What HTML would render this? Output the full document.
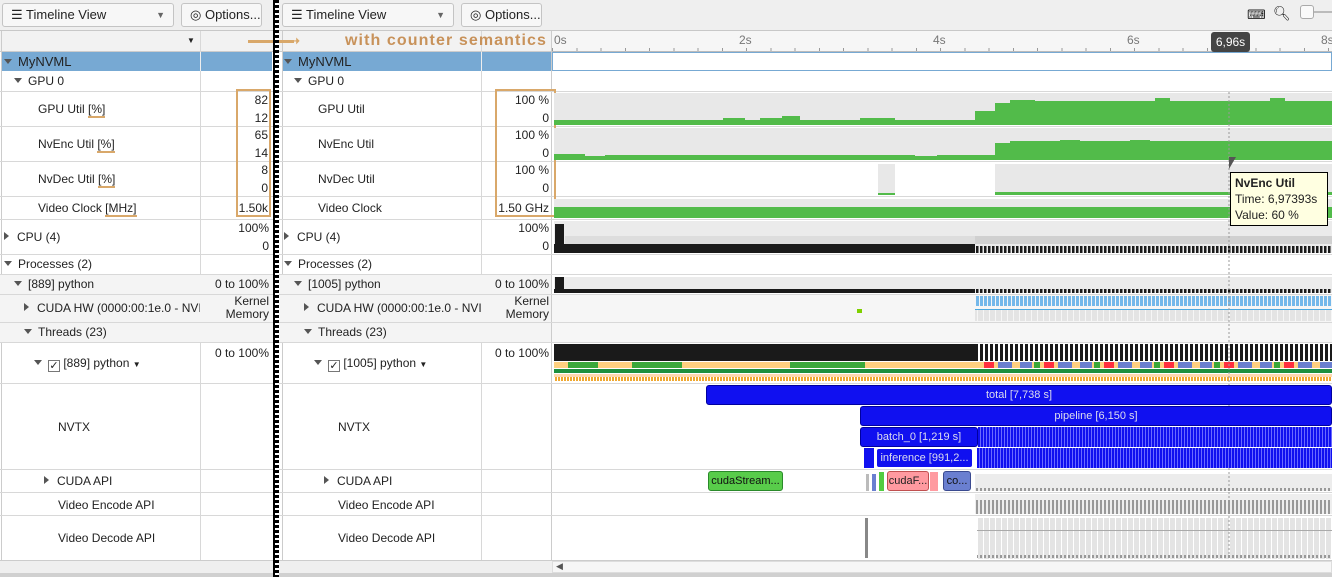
<!DOCTYPE html>
<html><head><meta charset="utf-8"><style>
*{margin:0;padding:0;box-sizing:border-box}
body{width:1332px;height:577px;overflow:hidden;background:#fff;font-family:"Liberation Sans",sans-serif;font-size:12px;color:#222;position:relative}
.a{position:absolute}
.btn{position:absolute;top:3px;height:24px;border:1px solid #c4c4c4;border-radius:3px;background:#f7f7f7;font-size:13px;line-height:22px;padding-left:8px}
.t{position:absolute;white-space:nowrap}
.v{position:absolute;text-align:right;white-space:nowrap}
.tri{display:inline-block;width:0;height:0;border-left:4px solid transparent;border-right:4px solid transparent;border-top:5px solid #555;margin-right:6px;vertical-align:2px}
.trr{display:inline-block;width:0;height:0;border-top:4px solid transparent;border-bottom:4px solid transparent;border-left:5px solid #555;margin-right:8px;vertical-align:1px}
.u{border-bottom:2px solid #d9a86a}
.nv{position:absolute;background:#1010f0;border:1px solid #0000a0;border-radius:3px;color:#dde;font-size:11px;text-align:center;line-height:18px;white-space:nowrap;overflow:hidden}
.strb{background:repeating-linear-gradient(90deg,#1010f0 0 2px,#6a6aff 2px 3px)}
</style></head><body>
<div class="a" style="left:0;top:0;width:1332px;height:31px;background:#efefef;border-bottom:1px solid #c8c8c8"></div>
<div class="btn" style="left:2px;width:172px">☰ Timeline View<span style="position:absolute;right:8px;top:0;font-size:9px;color:#666">▼</span></div>
<div class="btn" style="left:181px;width:81px">◎ Options...</div>
<div class="btn" style="left:282px;width:172px">☰ Timeline View<span style="position:absolute;right:8px;top:0;font-size:9px;color:#666">▼</span></div>
<div class="btn" style="left:461px;width:81px">◎ Options...</div>
<div class="t" style="left:1247px;top:7px;font-size:13px">⌨</div>
<div class="t" style="left:1273px;top:5px;font-size:14px">🔍︎</div>
<div class="a" style="left:1300px;top:5px;width:14px;height:14px;border:1px solid #aaa;border-radius:3px;background:#fafafa"></div>
<div class="a" style="left:1314px;top:11px;width:18px;height:2px;background:#bbb"></div>

<div class="a" style="left:0;top:31px;width:551px;height:21px;background:#f2f2f2;border-bottom:1px solid #ccc"></div>
<div class="a" style="left:200px;top:31px;width:1px;height:530px;background:#d8d8d8"></div>
<div class="a" style="left:481px;top:31px;width:1px;height:530px;background:#d8d8d8"></div>
<div class="a" style="left:551px;top:31px;width:1px;height:530px;background:#ccc"></div>
<div class="a" style="left:1px;top:31px;width:1px;height:530px;background:#ccc"></div>
<div class="a" style="left:282px;top:31px;width:1px;height:530px;background:#ccc"></div>
<div class="t" style="left:187px;top:36px;font-size:8px">▼</div>
<div class="a" style="left:248px;top:40px;width:46px;height:3px;background:#d9a86a"></div>
<div class="t" style="left:289px;top:33px;color:#d9a86a;font-size:13px;font-weight:bold">➝</div>
<div class="t" style="left:345px;top:32px;color:#c8925a;font-size:16px;font-weight:bold;letter-spacing:1.1px">with counter semantics</div>

<div class="a" style="left:552px;top:31px;width:780px;height:21px;background:#f6f6f6;border-bottom:1px solid #bbb;background-image:repeating-linear-gradient(90deg,#999 0 1px,transparent 1px 24.25px);background-size:780px 4px;background-repeat:no-repeat;background-position:0 17px"></div>
<div class="t" style="left:554px;top:33px;color:#777">0s</div>
<div class="t" style="left:739px;top:33px;color:#777">2s</div>
<div class="t" style="left:933px;top:33px;color:#777">4s</div>
<div class="t" style="left:1127px;top:33px;color:#777">6s</div>
<div class="t" style="left:1321px;top:33px;color:#777">8s</div>
<div class="a" style="left:1211px;top:32px;width:39px;height:20px;background:#444;border-radius:3px;color:#fff;text-align:center;line-height:20px">6,96s</div>

<div class="a" style="left:2px;top:52px;width:270px;height:19px;background:#77a9d3"></div>
<div class="a" style="left:283px;top:52px;width:268px;height:19px;background:#77a9d3"></div>
<div class="a" style="left:552px;top:52px;width:780px;height:19px;border:1px solid #77a9d3;background:#fff"></div>
<div class="a" style="left:200px;top:52px;width:1px;height:19px;background:#eee"></div>
<div class="a" style="left:481px;top:52px;width:1px;height:19px;background:#eee"></div>

<div class="a" style="left:0;top:91px;width:1332px;height:1px;background:#d8d8d8"></div>
<div class="a" style="left:0;top:126px;width:1332px;height:1px;background:#d8d8d8"></div>
<div class="a" style="left:0;top:161px;width:1332px;height:1px;background:#d8d8d8"></div>
<div class="a" style="left:0;top:196px;width:1332px;height:1px;background:#d8d8d8"></div>
<div class="a" style="left:0;top:219px;width:1332px;height:1px;background:#d8d8d8"></div>
<div class="a" style="left:0;top:254px;width:1332px;height:1px;background:#d8d8d8"></div>
<div class="a" style="left:0;top:274px;width:1332px;height:1px;background:#d8d8d8"></div>
<div class="a" style="left:0;top:275px;width:551px;height:19px;background:#f4f4f4"></div>
<div class="a" style="left:0;top:294px;width:1332px;height:1px;background:#d8d8d8"></div>
<div class="a" style="left:0;top:295px;width:551px;height:27px;background:#f4f4f4"></div>
<div class="a" style="left:552px;top:295px;width:780px;height:27px;background:#f6f6f6"></div>
<div class="a" style="left:0;top:322px;width:1332px;height:1px;background:#d8d8d8"></div>
<div class="a" style="left:0;top:323px;width:551px;height:19px;background:#f4f4f4"></div>
<div class="a" style="left:552px;top:323px;width:780px;height:19px;background:#f6f6f6"></div>
<div class="a" style="left:0;top:342px;width:1332px;height:1px;background:#d8d8d8"></div>
<div class="a" style="left:0;top:383px;width:1332px;height:1px;background:#d8d8d8"></div>
<div class="a" style="left:0;top:469px;width:1332px;height:1px;background:#d8d8d8"></div>
<div class="a" style="left:0;top:492px;width:1332px;height:1px;background:#d8d8d8"></div>
<div class="a" style="left:0;top:515px;width:1332px;height:1px;background:#d8d8d8"></div>
<div class="a" style="left:0;top:560px;width:1332px;height:1px;background:#ccc"></div>
<div class="a" style="left:0;top:561px;width:1332px;height:16px;background:#efefef"></div>
<div class="a" style="left:0;top:573px;width:1332px;height:4px;background:#d0d0d0"></div>
<div class="a" style="left:552px;top:561px;width:780px;height:12px;background:#f6f6f6;border:1px solid #ddd"></div>
<div class="t" style="left:556px;top:561px;font-size:9px;color:#555">◀</div>

<div class="t" style="left:4px;top:54px;font-size:13px"><span class="tri"></span>MyNVML</div>
<div class="t" style="left:14px;top:74px"><span class="tri"></span>GPU 0</div>
<div class="t" style="left:38px;top:102px">GPU Util <span class="u">[%]</span></div>
<div class="t" style="left:38px;top:137px">NvEnc Util <span class="u">[%]</span></div>
<div class="t" style="left:38px;top:172px">NvDec Util <span class="u">[%]</span></div>
<div class="t" style="left:38px;top:201px">Video Clock <span class="u">[MHz]</span></div>
<div class="t" style="left:4px;top:230px"><span class="trr"></span>CPU (4)</div>
<div class="t" style="left:4px;top:257px"><span class="tri"></span>Processes (2)</div>
<div class="t" style="left:14px;top:277px"><span class="tri"></span>[889] python</div>
<div class="t" style="left:24px;top:301px;width:176px;overflow:hidden"><span class="trr"></span>CUDA HW (0000:00:1e.0 - NVIDIA</div>
<div class="t" style="left:24px;top:325px"><span class="tri"></span>Threads (23)</div>
<div class="t" style="left:34px;top:356px"><span class="tri"></span><span style="display:inline-block;width:12px;height:12px;border:1px solid #777;background:#fff;font-size:11px;line-height:10px;text-align:center;vertical-align:-2px">✓</span> [889] python <span style="font-size:8px">▼</span></div>
<div class="t" style="left:58px;top:420px">NVTX</div>
<div class="t" style="left:44px;top:474px"><span class="trr"></span>CUDA API</div>
<div class="t" style="left:58px;top:498px">Video Encode API</div>
<div class="t" style="left:58px;top:531px">Video Decode API</div>
<div class="v" style="left:201px;width:67px;top:93px">82</div>
<div class="v" style="left:201px;width:67px;top:111px">12</div>
<div class="v" style="left:201px;width:67px;top:128px">65</div>
<div class="v" style="left:201px;width:67px;top:146px">14</div>
<div class="v" style="left:201px;width:67px;top:163px">8</div>
<div class="v" style="left:201px;width:67px;top:181px">0</div>
<div class="v" style="left:201px;width:67px;top:201px">1.50k</div>
<div class="v" style="left:201px;width:68px;top:221px">100%</div>
<div class="v" style="left:201px;width:68px;top:239px">0</div>
<div class="v" style="left:201px;width:68px;top:277px">0 to 100%</div>
<div class="v" style="left:201px;width:68px;top:295px;line-height:13px">Kernel<br>Memory</div>
<div class="v" style="left:201px;width:68px;top:346px">0 to 100%</div>
<div class="a" style="left:236px;top:89px;width:35px;height:128px;border:2px solid #d9a86a"></div>
<div class="a" style="left:273px;top:0;width:6px;height:577px;background:repeating-linear-gradient(180deg,#000 0 3px,#fff 3px 5px)"></div>
<div class="a" style="left:273px;top:0;width:2px;height:577px;background:#000"></div>

<div class="t" style="left:284px;top:54px;font-size:13px"><span class="tri"></span>MyNVML</div>
<div class="t" style="left:294px;top:74px"><span class="tri"></span>GPU 0</div>
<div class="t" style="left:318px;top:102px">GPU Util</div>
<div class="t" style="left:318px;top:137px">NvEnc Util</div>
<div class="t" style="left:318px;top:172px">NvDec Util</div>
<div class="t" style="left:318px;top:201px">Video Clock</div>
<div class="t" style="left:284px;top:230px"><span class="trr"></span>CPU (4)</div>
<div class="t" style="left:284px;top:257px"><span class="tri"></span>Processes (2)</div>
<div class="t" style="left:294px;top:277px"><span class="tri"></span>[1005] python</div>
<div class="t" style="left:304px;top:301px;width:177px;overflow:hidden"><span class="trr"></span>CUDA HW (0000:00:1e.0 - NVIDIA</div>
<div class="t" style="left:304px;top:325px"><span class="tri"></span>Threads (23)</div>
<div class="t" style="left:314px;top:356px"><span class="tri"></span><span style="display:inline-block;width:12px;height:12px;border:1px solid #777;background:#fff;font-size:11px;line-height:10px;text-align:center;vertical-align:-2px">✓</span> [1005] python <span style="font-size:8px">▼</span></div>
<div class="t" style="left:338px;top:420px">NVTX</div>
<div class="t" style="left:324px;top:474px"><span class="trr"></span>CUDA API</div>
<div class="t" style="left:338px;top:498px">Video Encode API</div>
<div class="t" style="left:338px;top:531px">Video Decode API</div>
<div class="v" style="left:482px;width:67px;top:93px">100 %</div>
<div class="v" style="left:482px;width:67px;top:111px">0</div>
<div class="v" style="left:482px;width:67px;top:128px">100 %</div>
<div class="v" style="left:482px;width:67px;top:146px">0</div>
<div class="v" style="left:482px;width:67px;top:163px">100 %</div>
<div class="v" style="left:482px;width:67px;top:181px">0</div>
<div class="v" style="left:482px;width:67px;top:201px">1.50 GHz</div>
<div class="v" style="left:482px;width:67px;top:221px">100%</div>
<div class="v" style="left:482px;width:67px;top:239px">0</div>
<div class="v" style="left:482px;width:67px;top:277px">0 to 100%</div>
<div class="v" style="left:482px;width:67px;top:295px;line-height:13px">Kernel<br>Memory</div>
<div class="v" style="left:482px;width:67px;top:346px">0 to 100%</div>
<div class="a" style="left:495px;top:89px;width:61px;height:128px;border:2px solid #d9a86a"></div>

<svg class="a" style="left:552px;top:92px" width="780" height="470" viewBox="552 92 780 470">
<defs>
<pattern id="vs" width="4" height="10" patternUnits="userSpaceOnUse"><rect width="2.5" height="10" fill="#1a1a1a"/></pattern>
<pattern id="vs2" width="5" height="10" patternUnits="userSpaceOnUse"><rect width="3" height="10" fill="#1a1a1a"/></pattern>
<pattern id="lb" width="4" height="10" patternUnits="userSpaceOnUse"><rect width="3" height="10" fill="#74b8ea"/></pattern>
<pattern id="gr" width="4" height="10" patternUnits="userSpaceOnUse"><rect width="2" height="10" fill="#999"/></pattern>
<pattern id="gl" width="6" height="10" patternUnits="userSpaceOnUse"><rect width="5" height="10" fill="#e4e4e4"/></pattern>
<pattern id="og" width="3" height="10" patternUnits="userSpaceOnUse"><rect width="2" height="10" fill="#f0a830"/></pattern>
<pattern id="mix" width="60" height="6" patternUnits="userSpaceOnUse"><rect width="12" height="6" fill="#6a7fd0"/><rect x="14" width="6" height="6" fill="#3aa83a"/><rect x="24" width="10" height="6" fill="#ff3040"/><rect x="38" width="14" height="6" fill="#6a7fd0"/></pattern>
</defs>
<rect x="554" y="93" width="778" height="32" fill="#e8e8e8"/>
<polygon fill="#52bb4a" points="554,125 554,120 723,120 723,118 745,118 745,120 760,120 760,118 782,118 782,116 800,116 800,120 860,120 860,118 895,118 895,120 975,120 975,111 995,111 995,103 1010,103 1010,100 1035,100 1035,101 1155,101 1155,98 1170,98 1170,101 1270,101 1270,98 1285,98 1285,101 1332,101 1332,125"/>
<rect x="554" y="128" width="778" height="32" fill="#e8e8e8"/>
<polygon fill="#52bb4a" points="554,160 554,154 585,154 585,156 605,156 605,155 915,155 915,156 937,156 937,155 995,155 995,143 1010,143 1010,141 1060,141 1060,140 1080,140 1080,141 1130,141 1130,140 1150,140 1150,141 1332,141 1332,160"/>
<rect x="878" y="164" width="17" height="31" fill="#e8e8e8"/>
<rect x="878" y="193" width="17" height="2" fill="#52bb4a"/>
<rect x="995" y="164" width="337" height="31" fill="#e8e8e8"/>
<rect x="995" y="192" width="337" height="3" fill="#52bb4a"/>
<rect x="554" y="199" width="778" height="19" fill="#e8e8e8"/>
<rect x="554" y="207" width="778" height="11" fill="#52bb4a"/>
<rect x="554" y="221" width="778" height="32" fill="#ebebeb"/>
<rect x="565" y="236" width="410" height="16" fill="#ddd"/>
<rect x="975" y="236" width="357" height="8" fill="#d0d0d0"/>
<rect x="554" y="244" width="421" height="9" fill="#1a1a1a"/>
<rect x="555" y="224" width="9" height="29" fill="#1a1a1a"/>
<rect x="975" y="246" width="357" height="7" fill="url(#vs)"/>
<rect x="554" y="277" width="778" height="16" fill="#ebebeb"/>
<rect x="554" y="289" width="421" height="4" fill="#1a1a1a"/>
<rect x="555" y="277" width="9" height="16" fill="#1a1a1a"/>
<rect x="975" y="289" width="357" height="4" fill="url(#vs)"/>
<rect x="975" y="296" width="357" height="10" fill="url(#lb)"/>
<rect x="975" y="309" width="357" height="1" fill="#4aa8e0"/>
<rect x="975" y="310" width="357" height="11" fill="url(#gl)"/>
<rect x="857" y="309" width="5" height="4" fill="#7fd000"/>
<rect x="554" y="344" width="421" height="17" fill="#1a1a1a"/>
<rect x="975" y="344" width="357" height="17" fill="url(#vs2)"/>
<rect x="554" y="362" width="778" height="6" fill="#ffd080"/>
<rect x="568" y="362" width="30" height="6" fill="#3aa83a"/>
<rect x="632" y="362" width="50" height="6" fill="#3aa83a"/>
<rect x="790" y="362" width="75" height="6" fill="#3aa83a"/>
<rect x="980" y="362" width="352" height="6" fill="url(#mix)"/>
<rect x="554" y="369" width="778" height="4" fill="#1e8f3e"/>
<rect x="554" y="374" width="778" height="3" fill="#ffd8b0"/>
<rect x="554" y="377" width="778" height="4" fill="url(#og)"/>
<rect x="975" y="474" width="357" height="17" fill="#ececec"/>
<rect x="975" y="488" width="357" height="3" fill="url(#gr)"/>
<rect x="866" y="474" width="3" height="17" fill="#bbb"/>
<rect x="872" y="474" width="4" height="17" fill="#6a7fd0"/>
<rect x="879" y="472" width="5" height="19" fill="#52cc40"/>
<rect x="975" y="494" width="357" height="20" fill="#eee"/>
<rect x="975" y="500" width="357" height="14" fill="url(#gr)"/>
<rect x="977" y="518" width="355" height="41" fill="url(#gl)"/>
<rect x="977" y="530" width="355" height="1" fill="#aaa"/>
<rect x="977" y="555" width="355" height="3" fill="url(#gr)"/>
<rect x="865" y="518" width="3" height="40" fill="#888"/>
<line x1="1229" y1="52" x2="1229" y2="560" stroke="#999" stroke-dasharray="2,2"/>
</svg>

<div class="nv" style="left:706px;top:385px;width:626px;height:20px">total [7,738 s]</div>
<div class="nv" style="left:860px;top:406px;width:472px;height:20px">pipeline [6,150 s]</div>
<div class="nv" style="left:860px;top:427px;width:118px;height:20px">batch_0 [1,219 s]</div>
<div class="a strb" style="left:978px;top:427px;width:354px;height:20px"></div>
<div class="a" style="left:864px;top:448px;width:10px;height:20px;background:#1010f0"></div>
<div class="nv" style="left:876px;top:448px;width:97px;height:20px;border:1px solid #fff">inference [991,2...</div>
<div class="a strb" style="left:977px;top:448px;width:355px;height:20px"></div>
<div class="nv" style="left:708px;top:471px;width:75px;height:20px;background:#58cc4a;border-color:#2a8a2a;color:#111">cudaStream...</div>
<div class="nv" style="left:887px;top:471px;width:42px;height:20px;background:#ff9aa0;border-color:#c05050;color:#222">cudaF...</div>
<div class="a" style="left:930px;top:472px;width:8px;height:19px;background:#ff9aa0"></div>
<div class="nv" style="left:943px;top:471px;width:28px;height:20px;background:#6a7fd0;border-color:#3a4a90;color:#111">co...</div>

<div class="a" style="left:1229px;top:157px;width:0;height:0;border-left:7px solid #555;border-bottom:12px solid transparent"></div>
<div class="a" style="left:1230px;top:172px;width:98px;height:54px;background:#ffffe1;border:1px solid #000;padding:2px 4px;font-size:12px;line-height:16px">
<b>NvEnc Util</b><br>Time: 6,97393s<br>Value: 60 %</div>
</body></html>
